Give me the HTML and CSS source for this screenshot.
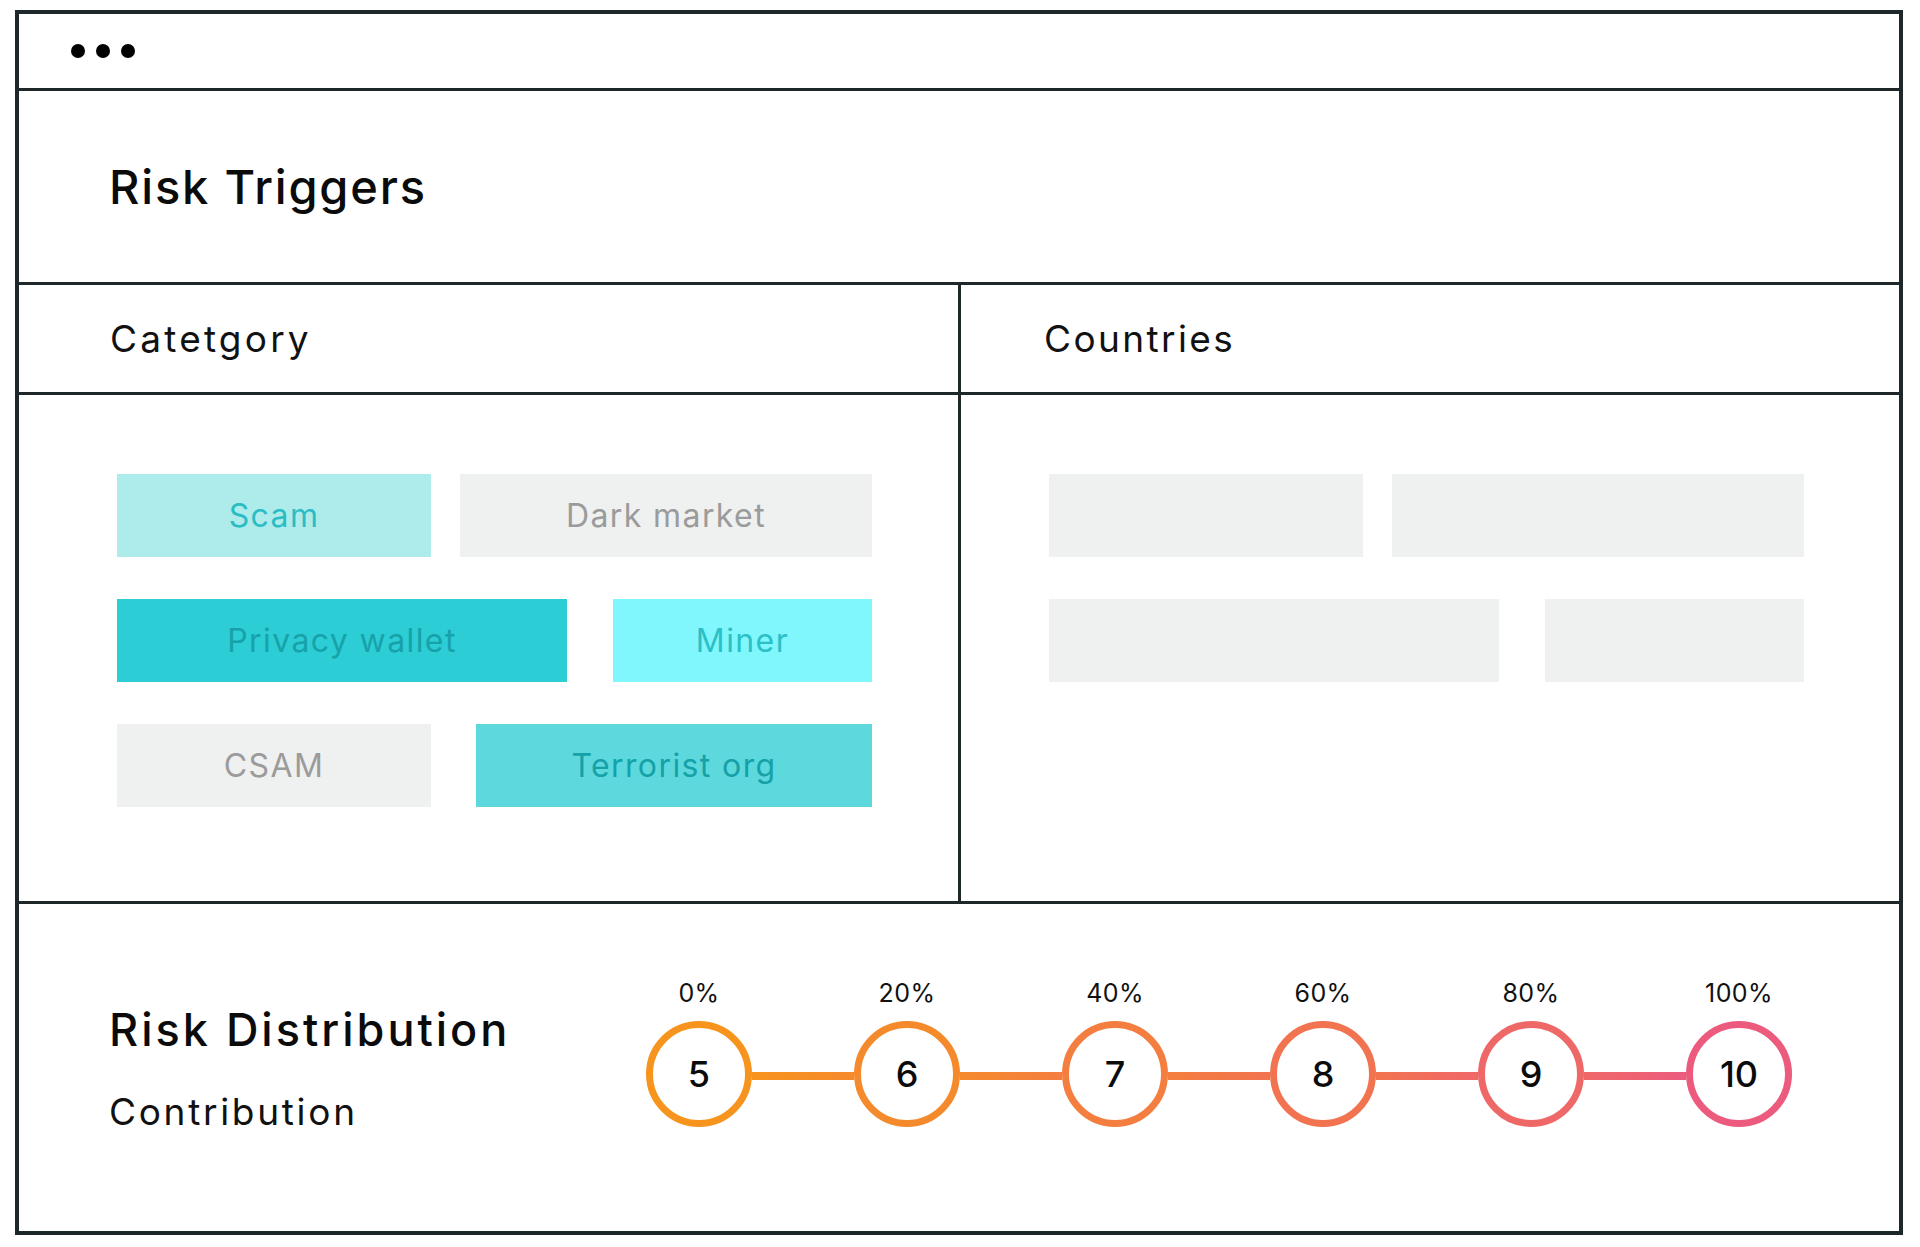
FILE: index.html
```html
<!DOCTYPE html>
<html lang="en">
<head>
<meta charset="utf-8">
<title>Risk Triggers</title>
<link rel="stylesheet" href="styles.css">
</head>
<body>
<div class="frame">
  <div class="titlebar">
    <span class="dot"></span><span class="dot"></span><span class="dot"></span>
  </div>
  <div class="triggers">
    <h1 class="title">Risk Triggers</h1>
  </div>
  <div class="grid">
    <div class="col-head col-left"><span class="label">Catetgory</span></div>
    <div class="col-head col-right"><span class="label label-right">Countries</span></div>
    <div class="col-body col-left">
      <div class="tags">
        <div class="row row-1">
          <div class="tag w-a tag-scam">Scam</div>
          <div class="tag w-b tag-grey">Dark market</div>
        </div>
        <div class="row row-2">
          <div class="tag w-c tag-privacy">Privacy wallet</div>
          <div class="tag w-d tag-miner">Miner</div>
        </div>
        <div class="row row-3">
          <div class="tag w-a tag-grey">CSAM</div>
          <div class="tag w-e tag-terror">Terrorist org</div>
        </div>
      </div>
    </div>
    <div class="col-body col-right">
      <div class="tags tags-right">
        <div class="row row-1">
          <div class="tag w-a tag-grey"></div>
          <div class="tag w-b tag-grey"></div>
        </div>
        <div class="row row-2">
          <div class="tag w-c tag-grey"></div>
          <div class="tag w-d tag-grey"></div>
        </div>
      </div>
    </div>
  </div>
  <div class="dist">
    <div class="dist-text">
      <h2 class="dist-title">Risk Distribution</h2>
      <p class="dist-sub">Contribution</p>
    </div>
    <div class="stepper">
      <div class="step"><span class="pct">0%</span><span class="ring c5">5</span></div>
      <div class="link l1"></div>
      <div class="step"><span class="pct">20%</span><span class="ring c6">6</span></div>
      <div class="link l2"></div>
      <div class="step"><span class="pct">40%</span><span class="ring c7">7</span></div>
      <div class="link l3"></div>
      <div class="step"><span class="pct">60%</span><span class="ring c8">8</span></div>
      <div class="link l4"></div>
      <div class="step"><span class="pct">80%</span><span class="ring c9">9</span></div>
      <div class="link l5"></div>
      <div class="step"><span class="pct">100%</span><span class="ring c10">10</span></div>
    </div>
  </div>
</div>
</body>
</html>
```
FILE: styles.css
```css
* { box-sizing: border-box; }

html, body {
  margin: 0;
  padding: 0;
  background: #ffffff;
}

body {
  font-family: "Inter", "Noto Sans", "DejaVu Sans", sans-serif;
  color: #111111;
}

.frame {
  margin: 10px 0 0 15px;
  width: 1888px;
  height: 1225px;
  border: 4px solid #1e272a;
  display: flex;
  flex-direction: column;
  background: #ffffff;
}

.titlebar {
  height: 77px;
  flex: 0 0 77px;
  border-bottom: 3px solid #1e272a;
  display: flex;
  align-items: center;
  gap: 11px;
  padding-left: 52px;
}

.dot {
  width: 14px;
  height: 14px;
  border-radius: 50%;
  background: #000000;
}

.triggers {
  flex: 0 0 194px;
  border-bottom: 3px solid #1e272a;
  display: flex;
  align-items: center;
  padding-left: 90px;
}

.title {
  margin: 0;
  font-size: 47px;
  font-weight: 500;
  line-height: 1;
  letter-spacing: 1.8px;
  color: #0b0b0b;
}

.grid {
  display: grid;
  grid-template-columns: 942px 1fr;
  grid-template-rows: 110px 509px;
}

.col-head {
  border-bottom: 3px solid #1e272a;
  display: flex;
  align-items: center;
}

.col-body {
  border-bottom: 3px solid #1e272a;
}

.col-left {
  border-right: 3px solid #1e272a;
}

.col-head.col-left { padding-left: 91px; }
.col-head.col-right { padding-left: 83px; }

.label {
  font-size: 37px;
  font-weight: 400;
  line-height: 1;
  letter-spacing: 3.2px;
  color: #111111;
}

.label-right {
  letter-spacing: 2.4px;
}

.tags {
  width: 755px;
  margin: 79px 0 0 98px;
  display: flex;
  flex-direction: column;
  gap: 42px;
}

.tags-right {
  width: 755px;
  margin-left: 88px;
}

.row {
  display: flex;
  justify-content: space-between;
}

.tag {
  height: 83px;
  display: flex;
  align-items: center;
  justify-content: center;
  font-size: 32px;
  font-weight: 400;
  letter-spacing: 1.4px;
}

.w-a { width: 314px; }
.w-b { width: 412px; }
.w-c { width: 450px; }
.w-d { width: 259px; }
.w-e { width: 396px; }

.tag-scam { background: #aeecec; color: #2bbcc4; }
.tag-grey { background: #eff0f0; color: #9b9b9b; }
.tag-privacy { background: #2ccdd4; color: #17a2aa; }
.tag-miner { background: #7ff7fc; color: #2cbfc7; }
.tag-terror { background: #5dd9dd; color: #15a1a8; }

.dist {
  flex: 1 1 auto;
  display: flex;
  align-items: flex-start;
  padding: 77px 0 0 90px;
}

.dist-text {
  flex: 0 0 537px;
  margin-top: 26px;
}

.dist-title {
  margin: 0;
  font-size: 45px;
  line-height: 45px;
  font-weight: 500;
  letter-spacing: 3px;
  color: #0b0b0b;
}

.dist-sub {
  margin: 41px 0 0 0;
  font-size: 37px;
  line-height: 37px;
  font-weight: 400;
  letter-spacing: 2.7px;
  color: #111111;
}

.stepper {
  display: flex;
  align-items: flex-end;
}

.step {
  width: 106px;
  display: flex;
  flex-direction: column;
  align-items: center;
}

.pct {
  font-size: 25px;
  line-height: 25px;
  margin-bottom: 15px;
  white-space: nowrap;
  letter-spacing: 0.4px;
  color: #111111;
}

.ring {
  width: 106px;
  height: 106px;
  border-radius: 50%;
  border: 7px solid #f7941d;
  display: flex;
  align-items: center;
  justify-content: center;
  font-size: 36px;
  font-weight: 500;
  color: #0b0b0b;
  background: #ffffff;
}

.c5 { border-color: #f7941d; }
.c6 { border-color: #f58a2c; }
.c7 { border-color: #f47e3f; }
.c8 { border-color: #f27350; }
.c9 { border-color: #ef6868; }
.c10 { border-color: #ec5b7e; }

.link {
  width: 102px;
  height: 8px;
  margin-bottom: 47px;
}

.l1 { background: linear-gradient(90deg, #f7941d, #f58a2c); }
.l2 { background: linear-gradient(90deg, #f58a2c, #f47e3f); }
.l3 { background: linear-gradient(90deg, #f47e3f, #f27350); }
.l4 { background: linear-gradient(90deg, #f27350, #ef6868); }
.l5 { background: linear-gradient(90deg, #ef6868, #ec5b7e); }
```
